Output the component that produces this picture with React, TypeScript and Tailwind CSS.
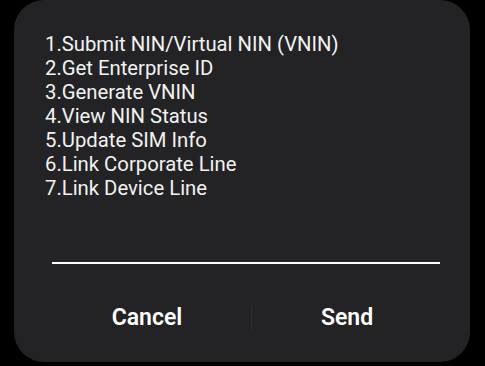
import React from 'react';

const options = [
    '1.Submit NIN/Virtual NIN (VNIN)',
    '2.Get Enterprise ID',
    '3.Generate VNIN',
    '4.View NIN Status',
    '5.Update SIM Info',
    '6.Link Corporate Line',
    '7.Link Device Line',
];

export default function App() {
    return (
        <div className="w-[485px] h-[366px] bg-black overflow-hidden" style={{ fontFamily: 'Roboto, "Noto Sans", sans-serif' }}>
            <div className="ml-[14px] w-[456px] h-[362px] bg-[#232325] rounded-[30px] flex flex-col">
                {/* USSD message */}
                <div className="pt-[32px] pl-[31px] text-[20.3px] leading-[24px] text-[#f2f2f2]">
                    {options.map((line) => (
                        <div key={line}>{line}</div>
                    ))}
                </div>

                {/* reply input */}
                <div className="mt-auto ml-[38px] mr-[30px] mb-[41px] h-[2px] bg-white" />

                {/* actions */}
                <div className="flex items-center h-[26px] mb-[31px] pl-[29px]">
                    <button className="w-[208px] text-center text-[23px] font-semibold text-white">Cancel</button>
                    <div className="w-px h-[24px] bg-[#2e2e30]" />
                    <button className="w-[190px] text-center text-[23px] font-semibold text-white">Send</button>
                </div>
            </div>
        </div>
    );
}
